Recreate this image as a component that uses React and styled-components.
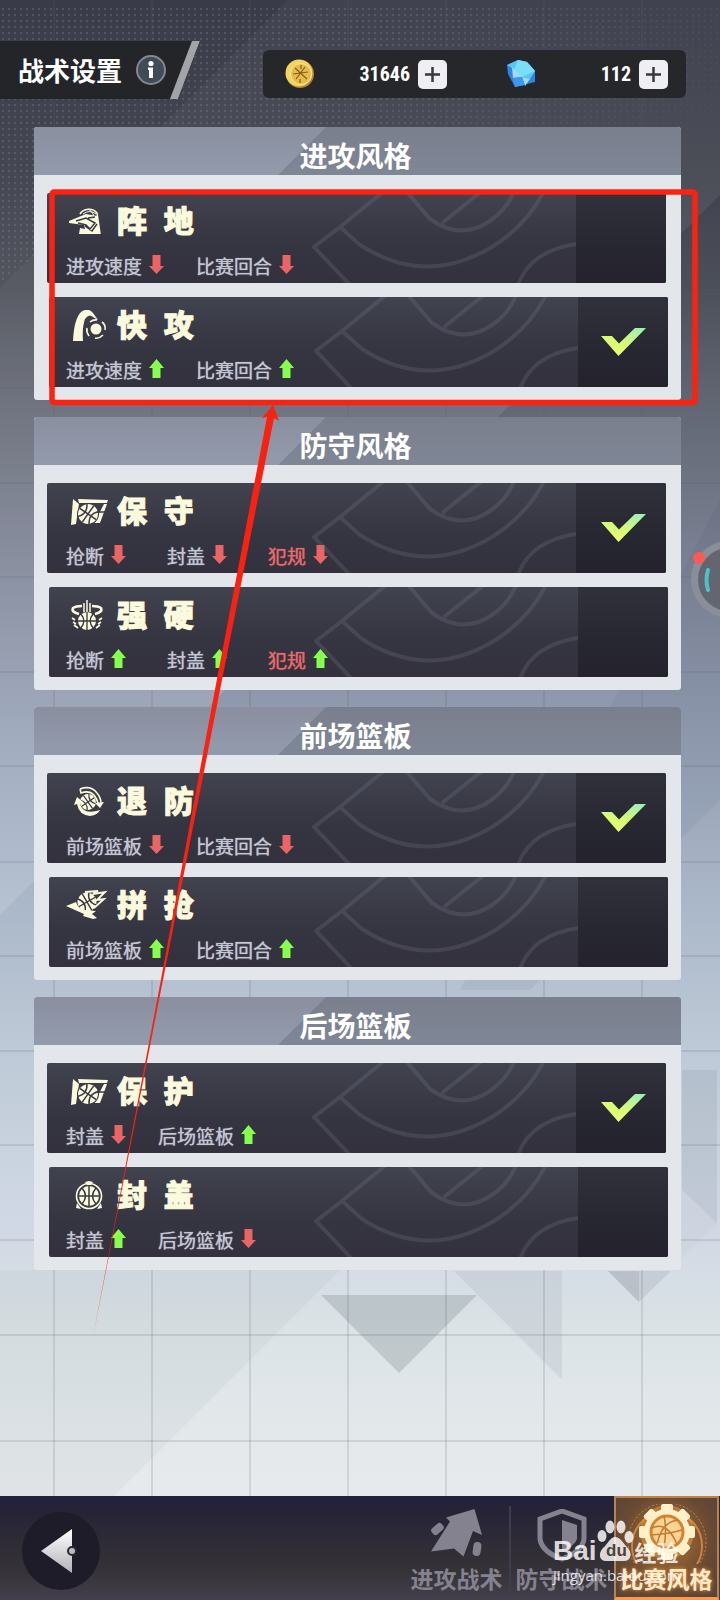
import React, { useState } from 'react';
import styled, { createGlobalStyle, css } from 'styled-components';

const cream = '#fbfadd';
const cjk = '"Noto Sans CJK SC", sans-serif';

const GlobalStyle = createGlobalStyle`
  * { box-sizing: border-box; }
  body { margin: 0; background: #3c3e4b; font-family: ${cjk}; }
  button, input, fieldset, legend { font: inherit; margin: 0; padding: 0; border: 0; min-width: 0; }
  button { cursor: pointer; }
`;

const Page = styled.div`
  position: relative;
  display: flex;
  flex-direction: column;
  min-height: 100vh;
  overflow: hidden;
  color: #fff;
  background: linear-gradient(#393b48 0, #454752 180px, #53565f 290px, #6a6e7a 400px, #858b9c 560px, #9ca6ba 720px, #b2bfd0 900px, #c2cedb 1050px, #d1d8e5 1230px, #dbe3e6 1330px, #e7eaed 1480px);
`;

const Backdrop = styled.svg`
  position: absolute;
  inset: 0;
  width: 100%;
  height: 100%;
`;

const Header = styled.header`
  position: relative;
  display: flex;
  justify-content: space-between;
  align-items: flex-end;
  padding: 41px 34px 0 0;
`;

const TitleBar = styled.div`
  position: relative;
  display: flex;
  align-items: center;
  gap: 14px;
  height: 58px;
  padding: 0 34px 0 18px;
  background: #242529;
  clip-path: polygon(0 0, 100% 0, calc(100% - 22px) 100%, 0 100%);
`;

const Slash = styled.svg`
  position: absolute;
  right: 0;
  top: 0;
`;

const PageTitle = styled.h1`
  margin: 0;
  font-size: 26px;
  line-height: 56px;
  font-weight: 700;
`;

const InfoButton = styled.button`
  width: 30px;
  height: 30px;
  background: none;
  svg { display: block; }
`;

const Wallet = styled.div`
  display: flex;
  gap: 59px;
  height: 48px;
  margin-bottom: 1px;
  padding: 0 18px 0 22px;
  align-items: center;
  border-radius: 6px;
  background: #26272b;
`;

const Currency = styled.div`
  display: flex;
  align-items: center;
  width: 162px;
`;

const Amount = styled.span`
  flex: 1;
  margin-right: 8px;
  text-align: right;
  font: 700 20px/28px "Liberation Sans Narrow", "Roboto Condensed", Roboto, sans-serif;
`;

const AddButton = styled.button`
  display: grid;
  place-items: center;
  width: 29px;
  height: 29px;
  border-radius: 5px;
  background: #eeeef3;
`;

const Panels = styled.main`
  position: relative;
  display: flex;
  flex-direction: column;
  gap: 17px;
  padding: 28px 39px 0 34px;
`;

const Panel = styled.section`
  border-radius: 3px;
  background: #e3e6ea;
  overflow: hidden;
`;

const PanelTitle = styled.h2`
  margin: 0;
  height: 48px;
  padding: 9px 4px 0 0;
  text-align: center;
  font-size: 28px;
  line-height: 39px;
  font-weight: 700;
  background:
    linear-gradient(135deg, transparent 206px, rgba(98, 103, 114, 0.4) 207px),
    linear-gradient(#8b8f9f, #929bad);
`;

const Options = styled.div`
  display: flex;
  flex-direction: column;
  gap: 14px;
  padding: 18px 13px 13px;
`;

const CheckCell = styled.span`
  display: grid;
  place-items: center;
  flex: none;
  width: 90px;
  background: linear-gradient(#30313b, #272731 60%, #24232d);
`;

const Option = styled.label`
  position: relative;
  display: flex;
  height: 90px;
  border-radius: 2px;
  overflow: hidden;
  cursor: pointer;
  background: linear-gradient(#41434f, #353441 60%, #32313d);
  ${(p) => (p.$shifted
    ? css`margin-left: 2px; padding-left: 17px;`
    : css`margin-right: 2px; padding-left: 19px; ${CheckCell} { padding-left: 4px; }`)}
`;

const Radio = styled.input`
  position: absolute;
  width: 100%;
  height: 100%;
  inset: 0;
  opacity: 0;
  cursor: pointer;
`;

const OptionBody = styled.div`
  display: flex;
  flex: 1;
  flex-direction: column;
  justify-content: space-between;
  width: 0;
  min-width: 0;
  padding: 9px 0 4px;
  white-space: nowrap;
`;

const OptionHead = styled.div`
  display: flex;
  align-items: center;
  gap: 8px;
  height: 40px;
  color: ${cream};
`;

const OptionName = styled.span`
  font-family: "Liberation Sans", ${cjk};
  font-size: 30px;
  line-height: 40px;
  font-weight: 900;
  white-space: pre;
  -webkit-text-stroke: 1px ${cream};
`;

const Stats = styled.div`
  display: flex;
  gap: ${(p) => (p.$wide ? 41 : 32)}px;
`;

const Stat = styled.span`
  display: flex;
  align-items: center;
  gap: 7px;
  font-size: 19px;
  line-height: 26px;
  color: ${(p) => (p.$alert ? '#ea6a6a' : '#c3c6d3')};
  text-shadow: 0 0 1px currentColor;
  svg { display: block; margin-bottom: 4px; }
`;

const CourtArt = styled.svg`
  flex: none;
`;

const Footer = styled.footer`
  position: relative;
  display: flex;
  justify-content: space-between;
  height: 104px;
  margin-top: auto;
  padding: 0 1px 0 22px;
  background: linear-gradient(#20233a, #272337 16%, #323036 60%, #353338 72%, #433f4d);
`;

const BackButton = styled.button`
  align-self: center;
  width: 78px;
  height: 78px;
  margin-top: 6px;
  border-radius: 50%;
  background: #1f1c2a;
  svg { display: block; }
`;

const Tabs = styled.nav`
  display: flex;
`;

const Tab = styled.button`
  position: relative;
  display: flex;
  flex-direction: column;
  align-items: center;
  justify-content: space-between;
  width: 105px;
  padding: 13px 0 8px;
  background: none;
  color: #85828f;
  font-size: 23px;
  line-height: 28px;
  font-weight: 700;
  white-space: nowrap;
  & + &::before {
    content: "";
    position: absolute;
    left: 0;
    top: 10px;
    bottom: 4px;
    width: 2px;
    background: #3f3d4b;
  }
  ${(p) => p.$active && css`
    color: #ffebcb;
    background: radial-gradient(circle at 50% 42%, #b67530, #684933 60%, #57433c);
    border: 2px solid #b8834f;
    border-bottom: 3px solid #ff984b;
    padding: 6px 0 5px;
    text-shadow: 0 0 4px #ff9d3c;
    &&::before { display: none; }
  `}
`;

const FloatingBall = styled.button`
  position: absolute;
  right: -48px;
  top: 541px;
  width: 77px;
  height: 77px;
  background: none;
  svg { display: block; overflow: visible; }
`;

const Annotation = styled.svg`
  position: absolute;
  left: 0;
  top: 0;
  pointer-events: none;
`;

const Watermark = styled.div`
  position: absolute;
  right: 40px;
  bottom: 15px;
  width: 127px;
  color: rgba(255, 255, 255, 0.82);
  pointer-events: none;
`;

const WatermarkLogo = styled.div`
  display: flex;
  align-items: flex-end;
  white-space: nowrap;
  font: 700 28px/28px "Liberation Sans", sans-serif;
  small { font: 700 22px/28px ${cjk}; margin-left: 1px; }
  svg { flex: none; margin-bottom: 4px; }
`;

const WatermarkUrl = styled.div`
  font: 400 15px/20px "Open Sans", sans-serif;
`;

const line = { fill: 'none', stroke: 'currentColor', strokeWidth: 2 };
const dark = { fill: 'none', stroke: '#3a3a46', strokeWidth: 1.5 };

const Ball = ({ x, y, r }) => (
  <g transform={`translate(${x} ${y}) scale(${r / 10})`}>
    <circle r="10" fill="currentColor" />
    <path d="M0-10V10M-10 0H10M-7-8Q0 0-7 8M7-8Q0 0 7 8" {...dark} strokeWidth="1.5" />
  </g>
);

const glyphs = {
  position: (
    <>
      <path d="M14 8a10 9 0 0 1 17-1l3 21" {...line} strokeWidth="1.6" />
      <path d="M17 8q7-5 13 0M22 3q6 3 7 12" {...line} strokeWidth="1" />
      <path d="M3 15 20 8l11 2 3 18H13l1-6 5 1-1-4L3 17z" fill="currentColor" />
      <path d="m10 15 10-3 9 5-5 6-4-4-8-2M22 12l7-1M19 20l7 5 5-7" {...dark} />
    </>
  ),
  fast: (
    <>
      <path d="M7 31Q8 9 15 2q7-5 12 1l5 7-5-3q-4-4-8 2-3 8-2 22z" fill="currentColor" />
      <circle cx="30" cy="19" r="5.5" fill="currentColor" />
      <path d="M24 12a9 9 0 0 1 7-2M36 12q4 3 3 8M37 25q-4 4-8 3M23 26q-3-4-2-8" {...line} strokeWidth="1.6" />
    </>
  ),
  board: (
    <>
      <path d="M12 3 42 4l-1 3H13zM38 8h3l-7 19h-6z" fill="currentColor" />
      <path d="m7 3 6 5-3 20-5 1z" fill="currentColor" />
      <circle cx="22" cy="18" r="11" fill="#3a3a46" />
      <g transform="rotate(35 22 18)"><Ball x="22" y="18" r="10" /></g>
      <path d="M31 16h8" {...dark} />
    </>
  ),
  tough: (
    <>
      <path d="M18 3v9M21 0v12M24 3v9" {...line} strokeWidth="1.5" />
      <path d="M13 14Q5 12 7 8q3-2 9-2M29 14q8-2 6-6-3-2-9-2" {...line} strokeWidth="2.6" />
      <Ball x="21" y="21" r="9" />
      <path d="m6 18 3 2m-2 2 3 2m-2 1 4 3M36 18l-3 2m2 2-3 2m2 1-4 3" {...line} strokeWidth="1.6" />
    </>
  ),
  retreat: (
    <>
      <g transform="rotate(-35 22 16)"><Ball x="22" y="16" r="8" /></g>
      <path d="M14 3q11-4 17 4 4 5 4 10M14 3l1 4q8-3 13 2 3 4 4 8" {...line} strokeWidth="1.6" />
      <path d="m29 17 9-1-4 6z" fill="currentColor" />
      <path d="m11 11-3 8 3-1q2 11 13 12 8-1 10-6-9 3-14 1-5-2-6-8l3-1z" fill="currentColor" />
    </>
  ),
  grab: (
    <>
      <g transform="rotate(-30 21 12)"><Ball x="21" y="12" r="9.5" /></g>
      <path d="m19 2 13-1-5 3 12-2-8 8 7-1-10 9" {...line} strokeWidth="1.8" />
      <path d="m0 16 10-4q2 7 9 8l11 1-4 3 5 4-4 1-10-3 1-2z" fill="currentColor" />
    </>
  ),
  block: (
    <>
      <circle cx="23" cy="16" r="12.5" {...line} strokeWidth="1.6" />
      <Ball x="23" y="16" r="10" />
      <path d="m19 2 4-1 4 1-2 3h-4zM11 23l-1 5 5 1zM35 23l1 5-5 1z" fill="currentColor" />
    </>
  ),
};

const StyleIcon = ({ name }) => (
  <svg width="43" height="32" viewBox="0 0 43 32" aria-hidden="true">{glyphs[name]}</svg>
);

const Trend = ({ up }) => (
  <svg width="15" height="19" viewBox="0 0 15 19" aria-label={up ? '上升' : '下降'}>
    {up
      ? <path d="M7.500 0 15 9h-3.500v10h-8V9H0z" fill="#86ff4e" />
      : <path d="M7.500 19 15 11h-3.500V0h-8v11H0z" fill="#eb6565" />}
  </svg>
);

const Court = () => (
  <CourtArt width="264" height="90" viewBox="0 0 264 90" fill="none" stroke="#767a8b" strokeOpacity="0.25" strokeWidth="4" aria-hidden="true">
    <path d="M38 92 2 54 28 34 72-2M28 34l20 18q65 42 132 2 35-22 52-56M94-2l24 28q31 22 60 2 18-13 24-30M130 30l40-32M206 92q12-34 58-41" />
  </CourtArt>
);

const Check = () => (
  <svg width="45" height="28" viewBox="0 0 45 28" aria-hidden="true">
    <defs>
      <linearGradient id="checkFill" x1="1" y1="0" x2="0.400" y2="1">
        <stop offset="0" stopColor="#96edbd" />
        <stop offset="0.600" stopColor="#d5fb78" />
        <stop offset="1" stopColor="#eafc70" />
      </linearGradient>
    </defs>
    <path d="M0 8h11l7 7.500L34 0h11L17.500 28z" fill="url(#checkFill)" />
  </svg>
);

const Plus = () => (
  <svg width="17" height="17" viewBox="0 0 17 17" aria-hidden="true">
    <path d="M8.500 1v15M1 8.500h15" stroke="#37383f" strokeWidth="2.500" />
  </svg>
);

const Coin = () => (
  <svg width="30" height="30" viewBox="0 0 30 30" aria-label="金币">
    <circle cx="15" cy="15" r="14" fill="#b8812c" />
    <circle cx="14" cy="14" r="13.500" fill="#f2d460" />
    <circle cx="16" cy="15" r="10.500" fill="#e6bc4c" stroke="#f9e693" />
    <path d="m10 9 12 11M20 8l-9 12M8 15l15-2M16 6v4M15 20v4" stroke="#8a5c24" strokeWidth="1.200" />
  </svg>
);

const Gem = () => (
  <svg width="30" height="30" viewBox="0 0 30 30" aria-label="钻石">
    <path d="m1 6 11-5 9 2 8 9v11l-20 5L2 15z" fill="#2f83e6" />
    <path d="m1 6 11-5 9 2 8 9-5 8-8-2L6 9z" fill="#58c8f2" />
    <path d="m12 1 9 2 8 9-13 6-8-7z" fill="#79def8" />
    <path d="m6 8 1 11 9-1zM16 18l8 2-5 7z" fill="#a5d9fb" />
    <path d="m2 15 5 4 2 9 10-2-3-8-9 1z" fill="#3a9af2" />
  </svg>
);

const Scene = () => (
  <Backdrop viewBox="0 0 720 1600" preserveAspectRatio="none" aria-hidden="true">
    <defs>
      <pattern id="dots" width="6" height="6" patternUnits="userSpaceOnUse">
        <circle cx="3" cy="3" r="1.200" fill="#8a8fa0" fillOpacity="0.300" />
      </pattern>
      <linearGradient id="fade" x1="0" y1="0" x2="1" y2="0.400">
        <stop offset="0.500" stopColor="#fff" />
        <stop offset="1" stopColor="#fff" stopOpacity="0.100" />
      </linearGradient>
      <linearGradient id="shade" x1="0" y1="0" x2="0" y2="1">
        <stop offset="0" stopColor="#20283c" stopOpacity="0.140" />
        <stop offset="0.600" stopColor="#20283c" stopOpacity="0.070" />
        <stop offset="1" stopColor="#20283c" stopOpacity="0" />
      </linearGradient>
      <mask id="dotMask"><path d="M0 5H720V140L360 140 34 256 0 285z" fill="url(#fade)" /></mask>
    </defs>
    <path d="M288 0H720V195L0 915V288z" fill="#fff" fillOpacity="0.040" />
    <path d="M720 195V1200H0V915z" fill="url(#shade)" />
    <path d="M720 800V500L460 990H530z" fill="#293250" fillOpacity="0.060" />
    <path d="M340 1270 0 1610V1270z" fill="#69727c" fillOpacity="0.060" />
    <rect width="720" height="300" fill="url(#dots)" mask="url(#dotMask)" />
    <path d="M321 1295H477L399 1373z" fill="#6d7880" fillOpacity="0.260" />
    <path d="M454 1271H562V1380z" fill="#7b8790" fillOpacity="0.130" />
    <path d="M608 1271H671L639 1302z" fill="#7d8592" fillOpacity="0.180" />
    <path d="M608 1271H639V1302z" fill="#7d8592" fillOpacity="0.180" />
    <path d="M682 1070H717V1223L682 1258z" fill="#75808e" fillOpacity="0.160" />
    <path d="M682 1190 717 1223 682 1258z" fill="#fff" fillOpacity="0.200" />
    <g stroke="#5d6674" strokeOpacity="0.220" strokeWidth="1.500">
      <path d="M54 0V1500M152 0V1500M250 0V1500M348 0V1500M446 0V1500M544 0V1500M642 0V1500" />
      <path d="M0 294H720M0 388H720M0 483H720M0 577H720M0 672H720M0 766H720M0 862H720M0 956H720M0 1051H720M0 1145H720M0 1240H720M0 1335H720M0 1441H720" />
    </g>
  </Backdrop>
);

const groups = [
  {
    title: '进攻风格',
    selected: 1,
    options: [
      { name: '阵  地', icon: 'position', stats: [['进攻速度', false], ['比赛回合', false]] },
      { name: '快  攻', icon: 'fast', stats: [['进攻速度', true], ['比赛回合', true]] },
    ],
  },
  {
    title: '防守风格',
    selected: 0,
    options: [
      { name: '保  守', icon: 'board', stats: [['抢断', false], ['封盖', false], ['犯规', false, true]] },
      { name: '强  硬', icon: 'tough', stats: [['抢断', true], ['封盖', true], ['犯规', true, true]] },
    ],
  },
  {
    title: '前场篮板',
    selected: 0,
    options: [
      { name: '退  防', icon: 'retreat', stats: [['前场篮板', false], ['比赛回合', false]] },
      { name: '拼  抢', icon: 'grab', stats: [['前场篮板', true], ['比赛回合', true]] },
    ],
  },
  {
    title: '后场篮板',
    selected: 0,
    options: [
      { name: '保  护', icon: 'board', stats: [['封盖', false], ['后场篮板', true]] },
      { name: '封  盖', icon: 'block', stats: [['封盖', true], ['后场篮板', false]] },
    ],
  },
];

function StylePanel({ group }) {
  const [selected, setSelected] = useState(group.selected);
  return (
    <Panel>
      <PanelTitle>{group.title}</PanelTitle>
      <Options role="radiogroup" aria-label={group.title}>
        {group.options.map((option, i) => (
          <Option key={option.name} $shifted={i === 1}>
            <Radio type="radio" name={group.title} checked={selected === i} onChange={() => setSelected(i)} />
            <OptionBody>
              <OptionHead>
                <StyleIcon name={option.icon} />
                <OptionName>{option.name}</OptionName>
              </OptionHead>
              <Stats $wide={option.stats.length > 2}>
                {option.stats.map(([label, up, alert]) => (
                  <Stat key={label} $alert={alert}>{label}<Trend up={up} /></Stat>
                ))}
              </Stats>
            </OptionBody>
            <Court />
            <CheckCell>{selected === i && <Check />}</CheckCell>
          </Option>
        ))}
      </Options>
    </Panel>
  );
}

const AttackIcon = () => (
  <svg width="52" height="48" viewBox="0 0 52 48" fill="currentColor" aria-hidden="true">
    <path d="m43.500 0 7.500 26-9-4-9.500 25.500-9.500-8-23 3 19-30-4-4z" />
    <rect x="0" y="16" width="13" height="8" rx="3" transform="rotate(-42 6.500 20)" />
    <rect x="42" y="33" width="8" height="14" rx="4" transform="rotate(8 46 40)" />
  </svg>
);

const DefendIcon = () => (
  <svg width="50" height="53" viewBox="0 0 50 53" aria-hidden="true">
    <path d="M25 2 47 10V30Q45 43 25 50 5 43 3 30V10z" fill="none" stroke="currentColor" strokeWidth="5" />
    <path d="M25 11 40 16V30Q38 37 25 42z" fill="currentColor" />
  </svg>
);

const StyleTabIcon = () => (
  <svg width="88" height="60" viewBox="0 0 88 60" aria-hidden="true">
    <circle cx="44" cy="38" r="39" fill="none" stroke="#d99b55" strokeDasharray="2 2" opacity="0.700" />
    <circle cx="44" cy="42" r="35" fill="none" stroke="#f09a45" strokeWidth="2" opacity="0.700" />
    <circle cx="44" cy="28" r="27" fill="#f7a341" opacity="0.450" />
    <g fill="#fff0c9">
      <circle cx="44" cy="28" r="23" />
      {[0, 45, 90, 135, 180, 225, 270, 315].map((a) => (
        <rect key={a} x="38" y="0" width="12" height="10" rx="2" transform={`rotate(${a} 44 28)`} />
      ))}
    </g>
    <circle cx="44" cy="28" r="16" fill="#fbd595" stroke="#d48330" strokeWidth="3" />
    <path d="M34 41Q38 18 55 16M29 24q15-7 25 16M41 12q3 14 0 31M28 31q18-1 31-5" fill="none" stroke="#c77a30" strokeWidth="1.500" />
  </svg>
);

export default function App() {
  return (
    <>
      <GlobalStyle />
      <Page>
        <Scene />
        <Header>
          <TitleBar>
            <PageTitle>战术设置</PageTitle>
            <InfoButton aria-label="说明">
              <svg width="30" height="30" viewBox="0 0 30 30">
                <circle cx="15" cy="15" r="14" fill="#3f4b57" stroke="#848891" strokeWidth="2" />
                <circle cx="15" cy="8.500" r="2.600" fill="#fff" />
                <path d="M12 12.500h5V23h-4V15h-1z" fill="#fff" />
              </svg>
            </InfoButton>
            <Slash width="30" height="58" viewBox="0 0 30 58" aria-hidden="true">
              <path d="M22 0h8L8 58H0z" fill="#a3a4aa" />
            </Slash>
          </TitleBar>
          <Wallet>
            <Currency>
              <Coin />
              <Amount>31646</Amount>
              <AddButton aria-label="增加金币"><Plus /></AddButton>
            </Currency>
            <Currency>
              <Gem />
              <Amount>112</Amount>
              <AddButton aria-label="增加钻石"><Plus /></AddButton>
            </Currency>
          </Wallet>
        </Header>

        <Panels>
          {groups.map((group) => <StylePanel key={group.title} group={group} />)}
        </Panels>

        <Footer>
          <BackButton aria-label="返回">
            <svg width="78" height="78" viewBox="0 0 78 78">
              <defs>
                <linearGradient id="backFill" x1="0" y1="0" x2="0" y2="1">
                  <stop offset="0" stopColor="#fff" />
                  <stop offset="1" stopColor="#b4b1ba" />
                </linearGradient>
              </defs>
              <path d="M19 39 50 17V61z" fill="url(#backFill)" />
              <circle cx="50" cy="39" r="4" fill="#bcbac2" stroke="#2a2832" strokeWidth="2" />
            </svg>
          </BackButton>
          <Tabs>
            <Tab><AttackIcon />进攻战术</Tab>
            <Tab><DefendIcon />防守战术</Tab>
            <Tab $active aria-current="page"><StyleTabIcon />比赛风格</Tab>
          </Tabs>
          <Watermark>
            <WatermarkLogo>
              Bai
              <svg width="37" height="41" viewBox="0 0 37 41" fill="currentColor" aria-hidden="true">
                <ellipse cx="5" cy="16" rx="4.500" ry="6" />
                <ellipse cx="13" cy="7" rx="4.500" ry="6.500" />
                <ellipse cx="24" cy="7" rx="4.500" ry="6.500" />
                <ellipse cx="32" cy="17" rx="4.500" ry="6" />
                <path d="M18 17c5 0 8 6 12 10 6 6 4 14-3 14H9C2 41 1 33 6 28c5-4 7-11 12-11z" />
                <text x="9" y="36" fontFamily="Liberation Sans" fontWeight="700" fontSize="17" fill="#4f4038">du</text>
              </svg>
              <small>经验</small>
            </WatermarkLogo>
            <WatermarkUrl>jingyan.baidu.com</WatermarkUrl>
          </Watermark>
        </Footer>

        <FloatingBall aria-label="悬浮球">
          <svg width="77" height="77" viewBox="0 0 77 77">
            <circle cx="38.500" cy="38.500" r="35" fill="#626671" stroke="#8a8e9a" strokeWidth="7" />
            <path d="M17 29q-3 10 0 20" fill="none" stroke="#4fc0c8" strokeWidth="4" strokeLinecap="round" />
            <circle cx="8" cy="17" r="6" fill="#fc5a50" />
          </svg>
        </FloatingBall>

        <Annotation width="720" height="1345" viewBox="0 0 720 1345" aria-hidden="true">
          <rect x="52" y="192" width="643" height="210.500" rx="2" fill="none" stroke="#fb2212" strokeWidth="5.500" />
          <path d="M273 405 279 421 274 418 218 700 161 990 93 1337 159 990 213 700 267 417 262 418z" fill="#f92212" />
        </Annotation>
      </Page>
    </>
  );
}
